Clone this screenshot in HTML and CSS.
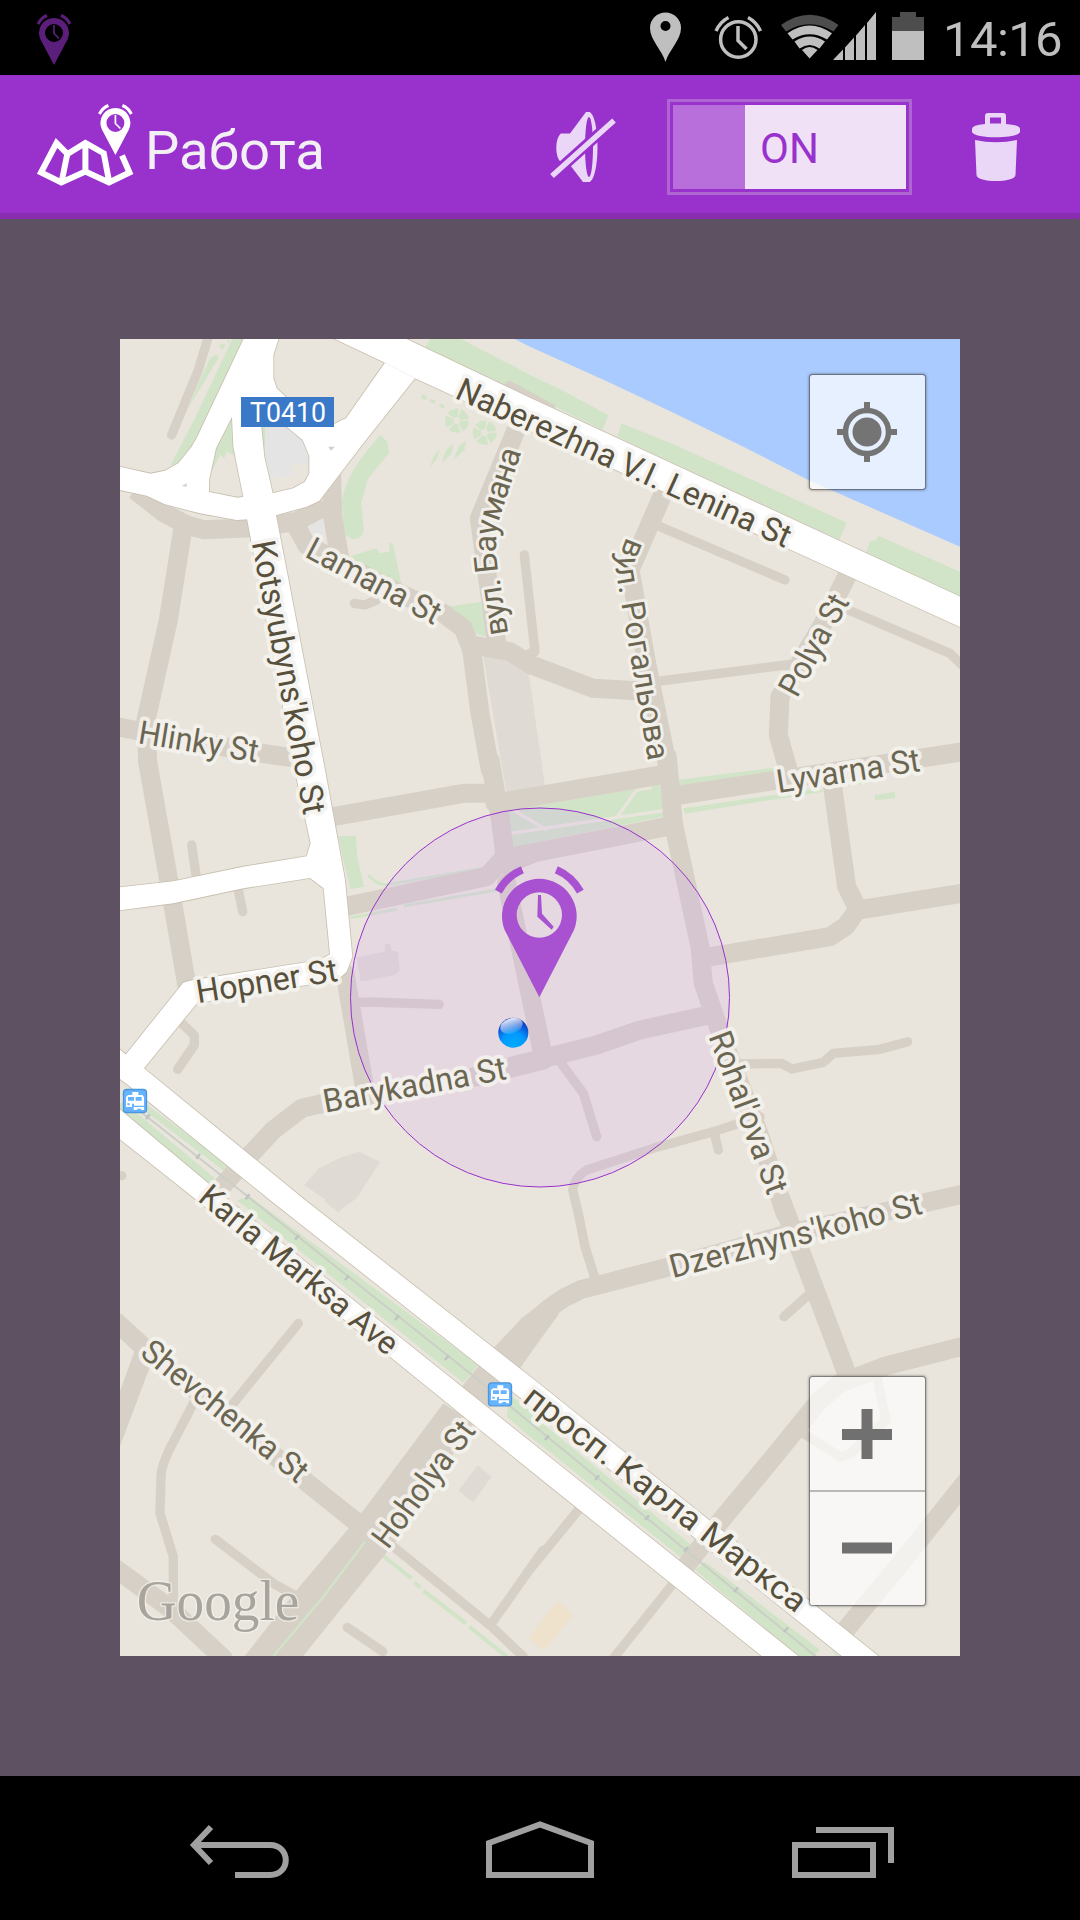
FILE: index.html
```html
<!DOCTYPE html>
<html lang="ru">
<head>
<meta charset="utf-8">
<title>Работа</title>
<link rel="stylesheet" href="styles.css">
</head>
<body>
<div class="status">
  <svg class="status-app" width="40" height="75" viewBox="34 0 40 75">
    <g id="alarm-pin">
      <path fill="currentColor" fill-rule="evenodd" d="M54 65L40.500 39.500A15 15 0 1 1 67.500 39.500ZM54 24a9 9 0 1 0 0 18a9 9 0 1 0 0-18Z"/>
      <path fill="none" stroke="currentColor" stroke-width="3" d="M38 24Q41 18 47 15.500M70 24Q67 18 61 15.500"/>
      <path fill="none" stroke="currentColor" stroke-width="1.700" d="M54 25V33.500L59 38.500"/>
    </g>
  </svg>
  <svg class="status-icons" width="280" height="75" viewBox="648 0 280 75">
    <path class="on" fill-rule="evenodd" d="M665.500 62C662 50 650 40 650 28a15.500 15.500 0 0 1 31 0C681 40 669 50 665.500 62ZM665.500 21a5 5 0 1 0 0 10a5 5 0 1 0 0-10Z"/>
    <g class="line">
      <circle cx="738.300" cy="39.500" r="17.700"/>
      <path d="M716 31Q720 22 728.500 17.500M760.500 31Q756.500 22 748 17.500"/>
      <path d="M738 26V40.500L746.500 49"/>
    </g>
    <path class="off" d="M781 25Q809.600 4.500 838.500 25L833.500 31.500Q809.600 17 786 31.500Z"/>
    <path class="on" d="M787.500 33.300Q809.600 17.500 832 33.300L827 39.500Q809.600 29 792.500 39.500ZM794.500 41.500Q809.600 31.500 825 41.500L819.500 48.500Q809.600 41.500 799.500 48.500ZM802 50Q809.600 44 817.500 50L809.600 58.500Z"/>
    <path class="on" d="M833 60L843 49.500V60ZM845 47.500L854 37.500V60H845ZM856 35.500L865 25V60H856ZM867 23L876 12V60H867Z"/>
    <path class="off" d="M892 17H900V12H916V17H924V31H892Z"/>
    <path class="on" d="M892 31H924V60H892Z"/>
  </svg>
  <span class="clock">14:16</span>
</div>

<header class="bar">
  <svg class="bar-logo" width="104" height="138" viewBox="34 75 104 138">
    <g fill="none" stroke="currentColor" stroke-width="6">
      <path d="M122 155.500L129.500 172.500L109 182.500L85.400 171.500L61.300 182.500L41 172.500L56.500 143L67.500 154L85.400 143L105 154"/>
      <path d="M67.500 153L61.800 181M85.400 143V172M103.500 152L109 181"/>
    </g>
    <use href="#alarm-pin" x="61.400" y="90"/>
  </svg>
  <h1 class="title">Работа</h1>
  <svg class="mute" width="70" height="138" viewBox="548 75 70 138">
    <path class="tool" d="M586 112L570 133.500H561C555 138 555 156 560 161H567L583 182H590V112Z"/>
    <ellipse class="tool" cx="589" cy="147" rx="8.500" ry="35"/>
    <ellipse class="gap" cx="589" cy="147" rx="4" ry="30"/>
    <path class="slash-gap" d="M548 179.500L618 116.500"/>
    <path class="slash" d="M552 176L614 120.500"/>
  </svg>
  <div class="toggle"><span class="toggle-off"></span><span class="toggle-on">ON</span></div>
  <svg class="trash" width="50" height="138" viewBox="971 75 50 138">
    <path class="tool" fill-rule="evenodd" d="M985 124V116Q985 113 988 113H1003Q1006 113 1006 116V124Q1020 125 1020 129V132C1018 139 974 139 972 132V129Q972 125 985 124ZM990 123.500H1001V117.500H990Z"/>
    <path class="tool" d="M975 140Q996 144.500 1017 140L1015.500 175C1015 183 977 183 976.500 175Z"/>
  </svg>
</header>

<main class="stage">
  <div class="map">
    <svg class="map-canvas" width="840" height="1317" viewBox="120 339 840 1317">
      <defs>
        <radialGradient id="dot" cx=".5" cy=".9" r="1"><stop offset="0" stop-color="#0af"/><stop offset=".4" stop-color="#09f"/><stop offset=".7" stop-color="#0c50d0"/><stop offset="1" stop-color="#0838b0"/></radialGradient>
        <linearGradient id="gloss" x1="0" y1="0" x2="0" y2="1"><stop offset="0" stop-color="#fff" stop-opacity=".9"/><stop offset="1" stop-color="#fff" stop-opacity=".1"/></linearGradient>
        <g id="avenues">
          <path class="t1" d="M660 20H875L1260 203L2570 809V900L915 145L825 98Z"/>
          <path class="t1" fill-rule="evenodd" d="M825 98L915 145L760 340L628 512L590 530L500 555L415 568L380 570L270 550L165 523L110 497L20 478V408L122 431L165 422L205 400L245 350L262 320L404 20H508L490 75V145L500 175L530 203L672 282L708 265ZM366 260L318 355L297 450V486L383 503L400 500L370 350ZM452 270L463 380L488 490L550 475L585 455L598 430V378L578 330L530 290Z"/>
          <path class="t3" d="M408 -740L498 -735L645 30L705 360L727 590L710 635L685 658L650 665L265 728L200 700L220 668L240 662L630 600L660 583L641 385L600 354L400 385L190 430L20 452V383L190 364L400 320L590 289L602 250L565 80Z"/>
          <path class="t3" d="M220 668L47 884L20 862V950L102 925L262 728Z"/>
          <path class="t5" d="M20 -460L47 -436L102 -395L585 0L1290 553L2330 1388H2220L1290 640L480 0L58 -342L20 -370Z"/>
          <path class="t5" d="M20 -280L355 0L1290 748L2090 1388H1980L1290 835L260 0L20 -190Z"/>
        </g>
        <g id="transit">
          <rect x="1.500" y="1.500" width="69" height="69" rx="10" fill="#66b3ff" stroke="#4c96dc" stroke-width="4"/>
          <path fill="#fff" fill-rule="evenodd" d="M9 24L15 18H28V9H46V18H58L63 24V50H33V44H27V54H9ZM15 24V35H33V24ZM38 24V35H56V24ZM13 43V49H20V43Z"/>
          <path fill="#fff" d="M32 54H63V63H56L53 59H44L41 63H32Z"/>
        </g>
      </defs>
      <rect class="land" x="120" y="339" width="840" height="1317"/>

      <!-- water, parks and blocks -->
      <g class="t1">
        <path class="green" d="M370 20H405L245 350L205 405H182L255 265Z"/>
        <path class="green" d="M322 72L325 85L235 235L270 150L300 85ZM335 40L347 45L338 60L327 52ZM352 30H362L352 42Z"/>
        <path class="green" d="M366 250L385 380L350 365L343 385L330 375L305 425L315 350Z"/>
        <path class="green" d="M965 20H1040L1290 150V215L945 52Z"/>
        <path class="green" d="M810 315L832 335L837 370L775 445L753 520L762 600Q755 630 728 627Q700 620 700 590L696 510Q710 430 790 340Z"/>
        <path class="green" d="M715 680L800 655L808 670L838 665V640H848L875 765L800 730Z"/>
        <path class="green" d="M1000 832L1115 815L1132 920L1100 912L1070 870Z"/>
        <path class="green" d="M935 192L950 198L948 209L934 206ZM962 207L976 210L974 222L960 217ZM990 220L1004 225L1001 236L988 230ZM988 358L982 385L960 412L970 380ZM1030 342L1025 370L995 400L1008 360ZM1067 332L1064 360L1030 390L1045 350Z"/>
        <g fill="none" class="greenline" stroke-width="26" stroke-dasharray="24 5">
          <circle cx="1041" cy="272" r="23"/><circle cx="1124" cy="308" r="23"/>
        </g>
        <path class="plaza" d="M455 290H530L578 330L598 378V402H545V438L480 445Z"/>
        <path class="plaza" d="M625 510H640V630L610 620L598 570Z"/>
        <path class="green" d="M454 290H465V370Z"/>
      </g>
      <g class="t2">
        <path class="water" d="M-60 20H1300V655L835 450L640 350L430 248L240 158L0 50Z"/>
        <path class="green" d="M0 135L95 180L235 255L218 300L75 230L0 190ZM275 280L435 345L950 578L928 630L262 320ZM1045 617L1300 730V805L1008 670L1020 632H1037Z"/>
        <path class="block" d="M-142 970L-70 985L-5 1020L45 1370L-70 1390Z"/>
        <path class="road-fill" d="M-72 155L-60 152L75 225V235L-80 172Z"/>
      </g>
      <g class="t3">
        <path class="green" d="M685 228H738L742 290L762 380L722 388L700 300Z"/>
        <path class="greenline" fill="none" stroke-width="9" d="M775 345Q800 375 830 374L1120 325M722 473L860 448M880 438L1160 390"/>
        <path class="green" d="M1195 152L1290 135V250L1208 262Z"/>
        <path class="block" d="M583 1275L627 1225L690 1193L748 1175L810 1206L740 1315L690 1350Z"/>
        <path class="block" d="M740 592L825 575V552H840L845 572L863 575L869 630L855 645L752 665Z"/>
      </g>
      <g class="t4">
        <path class="green" d="M-65 152L390 73L400 170L-52 262ZM440 60L800 15V25L450 80ZM460 145L870 85L880 95L465 161ZM1035 105L1095 95V115L1035 120ZM960 75L1010 60V72Z"/>
        <path class="paths" d="M-60 220L400 152M-50 150L50 210M262 170L320 90L365 83"/>
      </g>
      <g class="t5">
        <path class="green" d="M380 0L420 -10L1105 495L1060 548ZM1200 585L1290 650V735L1190 650Z"/>
        <path class="block" d="M1104 795L1144 830L1090 907L1045 872ZM640 0H720L685 38Z"/>
        <path class="greenline" fill="none" stroke-width="12" d="M820 1068L905 1135M913 1148L932 1162M940 1172L1068 1270M1078 1280L1190 1370"/>
      </g>
      <g class="t6">
        <path class="green" d="M-60 590L0 640L490 1040L455 1074L-10 700ZM525 1085L870 1350L830 1388L495 1110ZM905 1350L940 1380H925Z"/>
        <path class="sand" d="M82 1202L130 1245L42 1354L-5 1315Z"/>
      </g>
      <path class="green t3" d="M35 1000L50 990L360 1218L345 1235ZM30 1030L40 1025L315 1255L305 1275L20 1045Z"/>

      <!-- side streets -->
      <g class="streets">
        <g class="t1">
          <path class="w28" d="M295 20L265 120L185 315M1243 675L1275 965M733 820L765 825L800 810"/>
          <path class="butt" d="M75 480L160 548L230 585L280 599L430 593L560 574L645 530"/>
          <path d="M218 600L175 870L108 1170L113 1300"/>
          <path class="butt" d="M20 1190L400 1262L560 1285"/>
          <path d="M560 590L590 645L870 790L1000 850L1060 895L1085 960L1110 1150L1141 1320"/>
          <path class="butt" d="M665 430L668 560L690 690M1218 300L1108 565L1160 940"/>
          <path d="M1085 945L1200 965L1260 1003L1450 1075L1590 1083"/>
          <path class="road-fill ns" d="M1100 920L1195 940L1240 965L1275 945L1260 985L1200 990Z"/>
        </g>
        <g class="t2">
          <path d="M400 490L300 720L350 1000L415 1320"/>
          <path class="w28" d="M390 590L765 750M330 1061L780 1003M955 840L1260 970L1320 1028"/>
          <path d="M955 730L880 880L750 1100L745 1215L772 1310"/>
        </g>
        <g class="t3">
          <path class="butt" d="M112 0L176 360L233 690M670 170L1060 100H1160"/>
          <path d="M1140 0L1170 170L1185 290L1130 350L705 440M705 640L765 990M1190 370L1300 890"/>
          <path d="M1155 130L1260 112M1185 315L1270 280"/>
          <path class="w28" d="M730 728L780 726L988 733M210 785L253 826V855L203 928M245 255L258 345M383 380L398 455M20 1247H35"/>
          <path d="M1300 900L1100 950L640 1030L575 1045L490 1110L425 1180L340 1275"/>
        </g>
        <g class="t4">
          <path class="butt" d="M-60 122L420 40M430 108L1300 -25M-60 292L410 200M905 60L950 380L985 450L1300 399M985 445L948 498L900 530L530 592"/>
          <path d="M412 -10L430 190L510 560L520 670L575 830L690 1130L765 1360"/>
          <path class="butt" d="M550 762L330 810L200 855L-60 920"/>
          <path class="w28" d="M90 905L160 1000L200 1130M620 912L755 910L785 927L880 907L910 880L1050 868L1133 845M690 1070L560 1112L370 1165L170 1230Q135 1250 128 1290L145 1360L165 1460L195 1555M553 1120L565 1170"/>
        </g>
        <g class="t5">
          <path class="road-fill ns" d="M1000 610L750 945L560 1170L395 1380H570L860 1020L1090 670Z"/>
          <path d="M20 367L110 450L600 855L750 975"/>
          <path class="road-fill ns" d="M75 450L20 600V765L118 505Z"/>
          <path class="w28" d="M565 370L370 610M250 610L180 745Q153 800 153 830L150 940L190 1070V1200M316 1018L490 1150L560 1190M850 1040L1145 1280L1240 1370M1300 1050L1145 1270M712 1282L818 1355"/>
          <path d="M20 1108L180 1225L340 1375"/>
          <path class="road-fill ns" d="M1340 295L1290 312L1235 355L1150 445L1030 590L1110 660L1230 505L1290 420L1345 345Z"/>
        </g>
        <g class="t6">
          <path d="M1310 -20L780 100L400 205L155 268L100 295L50 330M750 -10L950 520M1310 436L1070 497L930 550L870 600L740 760L570 965L470 1095"/>
          <path class="w28" d="M835 285L762 350M145 930L-10 1120M430 1150L250 1375M1040 530L1068 660L960 762L930 770L820 700"/>
          <path d="M1320 830L1120 1080L930 1310"/>
        </g>
      </g>
      <path class="t5 greenline" fill="none" stroke-width="7" d="M765 1025L640 1190L490 1368"/>
      <g class="t5 tram"><path d="M60 -290L420 -5L1080 520L1290 692L2140 1388"/>
      <path class="ticks" d="M108 -242L119 -257M259 -124L270 -139M407 -2L418 -17M555 119L567 105M705 240L717 226M855 360L867 346M1005 480L1017 466M1305 720L1317 706M1455 840L1467 826M1605 960L1617 946M1722 1055L1734 1041M1872 1176L1884 1162M2022 1296L2034 1282"/></g>

      <!-- main roads: casing first, surface over it -->
      <use href="#avenues" class="casing"/>
      <use href="#avenues" class="surface"/>
      <path class="t1 road-fill" d="M655 350H675L663 362ZM215 468L230 460V470Z"/>

      <use href="#transit" transform="translate(123 1089) scale(.33333)"/>
      <use href="#transit" transform="translate(488 1382.300) scale(.33333)"/>

      <circle class="zone" cx="540" cy="997.500" r="189.500"/>

      <g class="labels">
        <g class="t1">
          <text class="major" transform="translate(1031 203) rotate(24.400)" textLength="1092" lengthAdjust="spacingAndGlyphs">Naberezhna V.I. Lenina St</text>
          <text class="major" transform="translate(425 638) rotate(79.200)" textLength="834" lengthAdjust="spacingAndGlyphs">Kotsyubyns'koho St</text>
          <text transform="translate(581 679) rotate(27.900)" textLength="442" lengthAdjust="spacingAndGlyphs">Lamana St</text>
          <text transform="translate(82 1239) rotate(9.300)" textLength="362" lengthAdjust="spacingAndGlyphs">Hlinky St</text>
          <path id="baumana" fill="none" stroke="none" d="M1195 911L1163 710Q1150 615 1175 545L1240 350"/>
          <text class="curved" textLength="560"><textPath href="#baumana">вул. Баумана</textPath></text>
        </g>
        <g class="t2">
          <path id="rogalova" fill="none" stroke="none" d="M290 620L266 682Q254 710 261 745L359 1320"/>
          <text class="curved" textLength="688"><textPath href="#rogalova">вул. Рогальова</textPath></text>
          <text transform="translate(801 1106) rotate(-61.300)" textLength="332" lengthAdjust="spacingAndGlyphs">Polya St</text>
        </g>
        <g class="t3">
          <text class="major" transform="translate(264 730) rotate(-9.100)" textLength="428" lengthAdjust="spacingAndGlyphs">Hopner St</text>
          <text transform="translate(646 1058) rotate(-10.500)" textLength="556" lengthAdjust="spacingAndGlyphs">Barykadna St</text>
        </g>
        <g class="t4">
          <text transform="translate(745 99) rotate(-8.800)" textLength="434" lengthAdjust="spacingAndGlyphs">Lyvarna St</text>
          <text transform="translate(535 829) rotate(69.600)" textLength="512" lengthAdjust="spacingAndGlyphs">Rohal'ova St</text>
        </g>
        <g class="t5">
          <text class="major" transform="translate(260 0) rotate(39.400)" textLength="740" lengthAdjust="spacingAndGlyphs">Karla Marksa Ave</text>
          <text transform="translate(86 465) rotate(39.200)" textLength="614" lengthAdjust="spacingAndGlyphs">Shevchenka St</text>
          <text transform="translate(834 1051) rotate(-53.400)" textLength="446" lengthAdjust="spacingAndGlyphs">Hoholya St</text>
        </g>
        <g class="t6">
          <text transform="translate(428 235) rotate(-14.500)" textLength="778" lengthAdjust="spacingAndGlyphs">Dzerzhyns'koho St</text>
          <text class="major" transform="translate(-26 604) rotate(37.700)" textLength="1042" lengthAdjust="spacingAndGlyphs">просп. Карла Маркса</text>
        </g>
      </g>

      <g class="t1">
        <rect x="393" y="201" width="279" height="90" fill="#3a78c8"/>
        <text class="shield" x="420" y="275" textLength="228" lengthAdjust="spacingAndGlyphs">T0410</text>
      </g>
      <text class="t5 brand" x="80" y="1261" textLength="488" lengthAdjust="spacingAndGlyphs">Google</text>

      <circle cx="513.300" cy="1032.700" r="15" fill="url(#dot)"/>
      <ellipse cx="511.500" cy="1026" rx="11.500" ry="7.500" fill="url(#gloss)" transform="rotate(-18 511 1026)"/>
      <g class="t4 marker">
        <path fill="currentColor" fill-rule="evenodd" d="M28 712L-76 510A112 112 0 1 1 132 510ZM28 397a68 68 0 1 0 0 136a68 68 0 1 0 0-136Z"/>
        <path fill="none" stroke="currentColor" stroke-width="23" d="M79 329A146 146 0 0 1 151 395M-23 329A146 146 0 0 0 -95 395"/>
        <path fill="currentColor" d="M24 405H33L36 461L71 500L65 509L22 470Z"/>
      </g>
    </svg>

    <button class="ctl locate" aria-label="location">
      <svg width="62" height="62" viewBox="0 0 62 62" fill="none" stroke="#747474"><circle cx="31" cy="31" r="21.500" stroke-width="5.500"/><circle cx="31" cy="31" r="14.500" fill="#747474" stroke="none"/><path stroke-width="6" d="M31 1V10M31 52V61M1 31H10M52 31H61"/></svg>
    </button>
    <div class="ctl zoom">
      <button class="zoom-btn" aria-label="zoom in"><svg width="50" height="50" viewBox="0 0 50 50"><path fill="#707070" d="M19.500 0H30.500V20H50V31H30.500V50H19.500V31H0V20H19.500Z"/></svg></button>
      <button class="zoom-btn" aria-label="zoom out"><svg width="50" height="50" viewBox="0 0 50 50"><path fill="#707070" d="M0 18.500H50V29.500H0Z"/></svg></button>
    </div>
  </div>
</main>

<nav class="nav">
  <svg width="108" height="144" viewBox="186 1776 108 144"><path d="M211 1827L194 1845L211 1863M193 1845H270C291 1845 291 1875 270 1875H235"/></svg>
  <svg width="108" height="144" viewBox="486 1776 108 144"><path d="M489 1875V1843L540 1824.500L591 1843V1875Z"/></svg>
  <svg width="108" height="144" viewBox="786 1776 108 144"><path d="M795 1845H873V1875H795ZM816 1830H891V1863"/></svg>
</nav>
</body>
</html>
```

FILE: styles.css
```css
* { box-sizing: border-box; }
body {
  margin: 0;
  width: 1080px;
  height: 1920px;
  display: flex;
  flex-direction: column;
  overflow: hidden;
  background: #000;
  font-family: Roboto, "Noto Sans", sans-serif;
}
svg { display: block; flex: none; }
button { padding: 0; margin: 0; border: 0; background: none; font: inherit; }

.status { height: 75px; display: flex; align-items: center; padding: 0 0 0 34px; color: #bfbfbf; }
.status-app { color: #5c1e7b; }
.status-icons { margin-left: 574px; }
.on { fill: #bfbfbf; }
.off { fill: #4d4d4d; }
.line { fill: none; stroke: #bfbfbf; stroke-width: 3.5; }
.clock { margin-left: 15px; font-size: 49px; line-height: 75px; letter-spacing: -0.6px; padding-top: 3px; white-space: nowrap; }

.bar { height: 144px; display: flex; background: #9932cc; border-bottom: 6px solid #882cb0; padding-left: 34px; color: #fff; }
.title { margin: 0 0 0 7px; width: 403px; font-size: 54.5px; font-weight: 400; line-height: 138px; padding-top: 6px; color: #f2eff5; }
.tool { fill: #ead6f6; }
.gap { fill: #9932cc; }
.slash-gap { stroke: #9932cc; stroke-width: 11; }
.slash { stroke: #ead6f6; stroke-width: 5.5; }
.toggle { display: flex; width: 245px; height: 96px; margin: 24px 59px 0 49px; border: 3px solid #ae65d2; padding: 3px; }
.toggle-off { width: 72px; background: #b86fdc; }
.toggle-on { flex: 1; background: #f0e1f7; color: #9932cc; font-size: 42px; line-height: 88px; padding-left: 15px; }

.stage { height: 1557px; padding: 120px; background: #5e5162; }
.map { position: relative; width: 840px; height: 1317px; }
.t1 { transform: translate(110px, 330px) scale(.333333); }
.t2 { transform: translate(530px, 330px) scale(.333333); }
.t3 { transform: translate(110px, 760px) scale(.333333); }
.t4 { transform: translate(530px, 760px) scale(.333333); }
.t5 { transform: translate(110px, 1200px) scale(.333333); }
.t6 { transform: translate(530px, 1200px) scale(.333333); }
.land { fill: #e9e5dc; }
.water { fill: #aacbff; }
.green { fill: #d1e4c8; }
.greenline { stroke: #d1e4c8; }
.plaza { fill: #e4e4e4; }
.block { fill: #dfdad3; }
.sand { fill: #eee2cd; }
.paths { fill: none; stroke: #e9e5dc; stroke-width: 10; }
.streets { fill: none; stroke: #d7d0c6; stroke-width: 57; stroke-linecap: round; stroke-linejoin: round; }
.streets .w28 { stroke-width: 28; }
.streets .butt { stroke-linecap: butt; }
.road-fill { fill: #d7d0c6; }
.streets .ns { stroke: none; }
.tram { fill: none; stroke: #cbcfc6; stroke-width: 6; }
.ticks { stroke: #c0c4c2; stroke-width: 8; }
.casing { fill: #c9c0b0; stroke: #c9c0b0; stroke-width: 5; }
.surface { fill: #fff; }
.zone { fill: rgba(214, 150, 254, .16); stroke: #9932cc; stroke-width: 1; }
.labels text {
  font-size: 98px;
  fill: #6b6652;
  stroke: rgba(245, 243, 238, .88);
  stroke-width: 24px;
  stroke-linejoin: round;
  paint-order: stroke;
}
.labels .curved { font-size: 96px; stroke-width: 18px; }
.labels .major { fill: #57503c; }
.shield { fill: #fff; font-size: 82px; }
.brand { font: 168px "Liberation Serif", serif; fill: #a8a49e; stroke: rgba(245, 243, 238, .7); stroke-width: 8px; paint-order: stroke; }
.marker { color: #a852d1; }

.ctl {
  position: absolute;
  left: 689.5px;
  width: 115px;
  border-radius: 3px;
  background: rgba(255, 255, 255, .7);
  box-shadow: 0 0 0 1px rgba(60, 60, 60, .45), 0 0 2px 1.5px rgba(60, 60, 60, .3);
}
.locate { top: 36px; height: 114px; display: flex; align-items: center; justify-content: center; }
.zoom { top: 1038px; height: 228px; display: flex; flex-direction: column; }
.zoom-btn { flex: 1; display: flex; align-items: center; justify-content: center; }
.zoom-btn + .zoom-btn { border-top: 2px solid #b9b8b6; }

.nav { height: 144px; display: flex; padding-left: 186px; gap: 192px; background: #000; }
.nav path { fill: none; stroke: #a0a0a0; stroke-width: 6; }
```
